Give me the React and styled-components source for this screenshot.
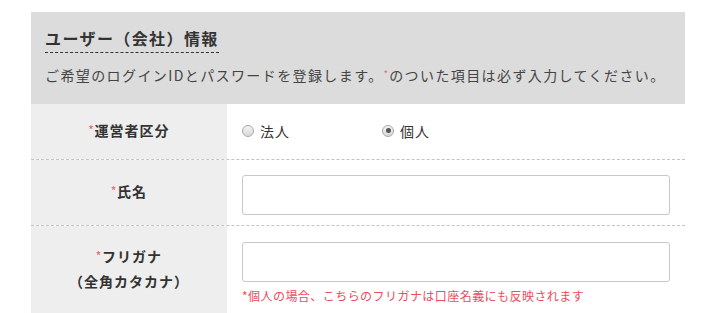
import styled, { createGlobalStyle } from "styled-components";

const Global = createGlobalStyle`
  body {
    margin: 0;
    background: #fff;
    font-family: "Noto Sans CJK JP", "Noto Sans", sans-serif;
    color: #333;
  }
`;

const Page = styled.div`
  padding: 12px 20px 0 31px;
`;

const Panel = styled.section`
  width: 654px;
`;

const Head = styled.div`
  background: #dcdcdc;
  padding: 15px 14px 19px;
`;

const Title = styled.h2`
  display: block;
  width: fit-content;
  margin: 0;
  font-size: 16px;
  line-height: 22px;
  font-weight: 700;
  letter-spacing: 1.4px;
  color: #333;
  padding-bottom: 3px;
  border-bottom: 1px dashed #333;
`;

const Lead = styled.p`
  margin: 12px 0 0;
  font-size: 14px;
  line-height: 20px;
  letter-spacing: 1.4px;
  white-space: nowrap;
  color: #444;
`;

const Req = styled.span`
  color: #e8717f;
  font-size: 10px;
  line-height: 1;
  vertical-align: 3px;
  letter-spacing: 0;
  margin-right: 1px;
`;

const Row = styled.div`
  display: grid;
  grid-template-columns: 196px 1fr;
  border-bottom: ${(p) => (p.$last ? "none" : "1px dashed #c4c4c4")};
`;

const Label = styled.div`
  background: #eee;
  display: flex;
  flex-direction: column;
  align-items: center;
  justify-content: center;
  padding-bottom: 3px;
  font-size: 14px;
  line-height: 25px;
  font-weight: 700;
  letter-spacing: 1px;
  color: #333;
`;

const Field = styled.div`
  padding: ${(p) => p.$pad || "15px 15px 10px"};
  display: flex;
  flex-direction: column;
`;

const Radios = styled.div`
  display: flex;
  height: 55px;
  align-items: center;
  padding: 0 15px 2px;
  box-sizing: border-box;
`;

const RadioOpt = styled.label`
  width: 140px;
  display: flex;
  align-items: center;
  gap: 6px;
  font-size: 14px;
  line-height: 20px;
  color: #333;
  letter-spacing: 1px;
`;

const Dot = styled.span`
  width: 12px;
  height: 12px;
  box-sizing: border-box;
  border-radius: 50%;
  border: 1px solid #a9a9a9;
  background: linear-gradient(#f4f4f4, #d8d8d8);
  display: flex;
  align-items: center;
  justify-content: center;
  &::after {
    content: "";
    width: 5px;
    height: 5px;
    border-radius: 50%;
    background: ${(p) => (p.$on ? "#555" : "transparent")};
  }
`;

const Input = styled.input`
  box-sizing: border-box;
  width: 428px;
  height: 40px;
  border: 1px solid #c8c8c8;
  border-radius: 3px;
  background: #fff;
  outline: none;
`;

const Note = styled.div`
  margin-top: 6px;
  font-size: 12px;
  line-height: 16px;
  letter-spacing: 0.45px;
  white-space: nowrap;
  color: #ee4b5d;
`;

export default function App() {
  return (
    <Page>
      <Global />
      <Panel>
        <Head>
          <Title>ユーザー（会社）情報</Title>
          <Lead>
            ご希望のログインIDとパスワードを登録します。<Req>*</Req>のついた項目は必ず入力してください。
          </Lead>
        </Head>
        <Row>
          <Label>
            <span><Req>*</Req>運営者区分</span>
          </Label>
          <Radios>
            <RadioOpt><Dot />法人</RadioOpt>
            <RadioOpt><Dot $on />個人</RadioOpt>
          </Radios>
        </Row>
        <Row>
          <Label>
            <span><Req>*</Req>氏名</span>
          </Label>
          <Field>
            <Input />
          </Field>
        </Row>
        <Row $last>
          <Label>
            <span><Req>*</Req>フリガナ</span>
            <span>（全角カタカナ）</span>
          </Label>
          <Field $pad="16px 15px 11px">
            <Input />
            <Note>*個人の場合、こちらのフリガナは口座名義にも反映されます</Note>
          </Field>
        </Row>
      </Panel>
    </Page>
  );
}
